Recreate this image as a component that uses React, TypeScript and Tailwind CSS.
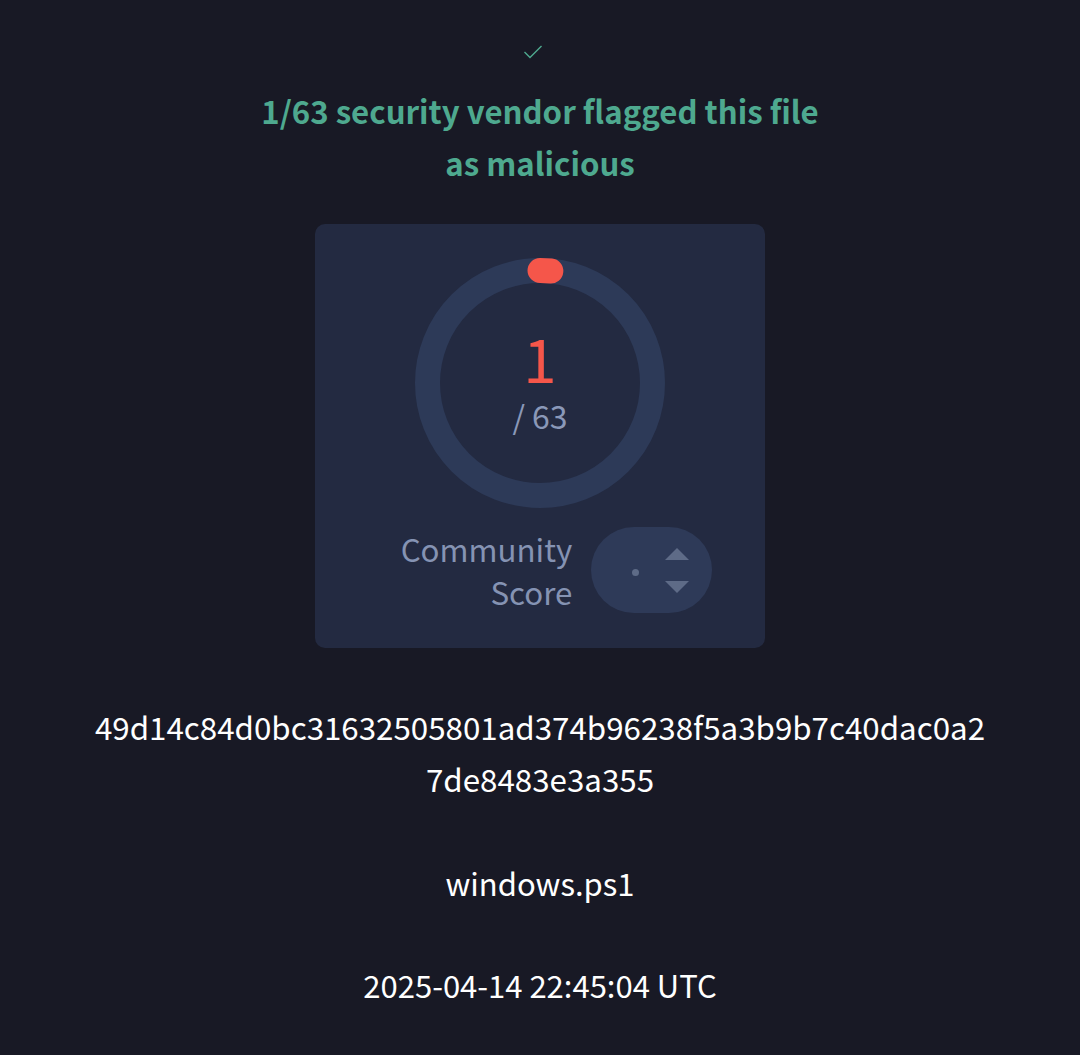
import React from "react";

const font = { fontFamily: '"Noto Sans CJK SC", "Noto Sans", sans-serif' };

function Ring() {
  const r = 112.5;
  const c = 2 * Math.PI * r;
  return (
    <svg width="250" height="250" viewBox="0 0 250 250" className="block">
      <circle cx="125" cy="125" r={r} fill="none" stroke="#2d3a58" strokeWidth="25" />
      <circle
        cx="125"
        cy="125"
        r={r}
        fill="none"
        stroke="#f5564a"
        strokeWidth="25"
        strokeLinecap="round"
        strokeDasharray={`11 ${c}`}
        transform="rotate(-90 125 125)"
      />
    </svg>
  );
}

export default function App() {
  return (
    <div className="min-h-[1055px] w-full bg-[#181925] flex flex-col items-center text-center" style={font}>
      <svg width="20" height="16" viewBox="0 0 20 16" className="mt-[44px] mr-[14px]">
        <polyline points="1.5,8 7,13.5 18.5,2" fill="none" stroke="#4ea98f" strokeWidth="1.4" />
      </svg>
      <div className="mt-[25px] text-[31.2px] leading-[52px] font-bold text-[#4ea98f] w-[582px]">
        1/63 security vendor flagged this file as malicious
      </div>
      <div className="mt-[35px] w-[450px] h-[424px] rounded-[10px] bg-[#232a41] flex flex-col items-center pt-[34px]">
        <div className="relative w-[250px] h-[250px]">
          <Ring />
          <div className="absolute inset-0 flex flex-col items-center justify-center">
            <div className="text-[60px] leading-[48px] text-[#f5564a] font-normal mt-[2px]">1</div>
            <div className="text-[32px] leading-[40px] text-[#8a98b8] mt-[14px]">/ 63</div>
          </div>
        </div>
        <div className="mt-[19px] flex items-center gap-[19px] pl-[33px]">
          <div className="text-[31.3px] leading-[43px] text-[#8593b3] text-right">
            Community
            <br />
            Score
          </div>
          <div className="w-[121px] h-[86px] rounded-full bg-[#2e3a58] flex items-center pl-[41px] gap-[26px]">
            <div className="w-[7px] h-[7px] rounded-full bg-[#5e6b87] mt-[4px]" />
            <div className="flex flex-col gap-[21px]">
              <svg width="24" height="12" viewBox="0 0 24 12">
                <polygon points="0,12 24,12 12,0" fill="#5e6b87" />
              </svg>
              <svg width="24" height="12" viewBox="0 0 24 12">
                <polygon points="0,0 24,0 12,12" fill="#5e6b87" />
              </svg>
            </div>
          </div>
        </div>
      </div>
      <div className="mt-[53px] text-[31.3px] leading-[52px] text-white w-[892px] break-all">
        49d14c84d0bc31632505801ad374b96238f5a3b9b7c40dac0a27de8483e3a355
      </div>
      <div className="mt-[52px] text-[31px] leading-[52px] text-white">windows.ps1</div>
      <div className="mt-[50px] text-[31px] leading-[52px] text-white">2025-04-14 22:45:04 UTC</div>
    </div>
  );
}
